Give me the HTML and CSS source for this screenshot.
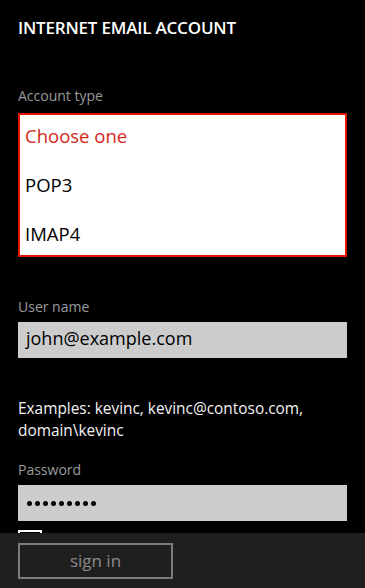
FILE: index.html
```html
<!DOCTYPE html>
<html lang="en">
<head>
    <meta charset="UTF-8">
    <meta name="viewport" content="width=device-width, initial-scale=1.0">
    <title>Internet Email Account</title>
    <link rel="stylesheet" href="styles.css">
</head>
<body>

    <div class="screen">
        <!-- Form -->
        <div class="content">
            <h1 class="title">INTERNET EMAIL ACCOUNT</h1>

            <div class="label label-type">Account type</div>
            <div class="picker">
                <div class="picker-item selected">Choose one</div>
                <div class="picker-item">POP3</div>
                <div class="picker-item">IMAP4</div>
            </div>

            <div class="label label-user">User name</div>
            <div class="textbox">john@example.com</div>

            <p class="hint">Examples: kevinc, kevinc@contoso.com, domain\kevinc</p>

            <div class="label label-pass">Password</div>
            <div class="textbox password">
                <span class="dot"></span><span class="dot"></span><span class="dot"></span>
                <span class="dot"></span><span class="dot"></span><span class="dot"></span>
                <span class="dot"></span><span class="dot"></span><span class="dot"></span>
            </div>

            <div class="checkbox"></div>
        </div>

        <!-- App bar -->
        <div class="appbar">
            <button class="signin-btn">sign in</button>
        </div>
    </div>

</body>
</html>
```

FILE: styles.css
```css
body {
    font-family: 'Open Sans', 'Noto Sans', sans-serif;
    margin: 0;
    padding: 0;
    background-color: #000;
    color: #fff;
}
.screen {
    display: flex;
    flex-direction: column;
    width: 365px;
    height: 588px;
    overflow: hidden;
}
.content {
    flex: 1;
    overflow: hidden;
    padding: 18px 18px 0 18px;
}
.title {
    margin: 0;
    font-size: 17px;
    line-height: 20px;
    font-weight: 600;
    letter-spacing: -0.2px;
}
.label {
    font-size: 14px;
    line-height: 18px;
    color: #9a9a9a;
}
.label-type {
    margin-top: 49px;
}
.label-user {
    margin-top: 41px;
}
.label-pass {
    margin-top: 19px;
}
.picker {
    margin-top: 8px;
    padding: 8px 5px;
    background: #fff;
    border: 2px solid #e51400;
}
.picker-item {
    font-size: 18.5px;
    line-height: 26px;
    color: #000;
    margin-bottom: 23px;
}
.picker-item:last-child {
    margin-bottom: 0;
}
.picker-item.selected {
    color: #d4271a;
}
.textbox {
    margin-top: 6px;
    height: 36px;
    padding: 0 8px;
    background: #cccccc;
    color: #000;
    font-size: 18px;
    line-height: 33px;
    box-sizing: border-box;
}
.hint {
    margin: 40px 0 0 0;
    font-size: 15.4px;
    line-height: 22px;
    color: #f2f2f2;
}
.password {
    display: flex;
    align-items: center;
    gap: 3px;
    padding-left: 9px;
}
.dot {
    width: 5px;
    height: 5px;
    border-radius: 50%;
    background: #000;
}
.checkbox {
    margin-top: 9px;
    width: 24px;
    height: 24px;
    border: 2px solid #fff;
    box-sizing: border-box;
}
.appbar {
    height: 55px;
    background-color: #1f1f1f;
    padding: 10px 18px 0 18px;
    box-sizing: border-box;
}
.signin-btn {
    width: 155px;
    height: 36px;
    background: transparent;
    border: 2px solid #7b7b7b;
    color: #8a8a8a;
    font-family: 'Open Sans', 'Noto Sans', sans-serif;
    font-size: 17px;
    padding: 0 0 2px 0;
}
```
